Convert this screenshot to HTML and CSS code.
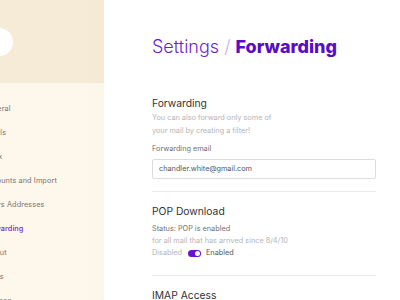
FILE: index.html
```html
<!DOCTYPE html>
<html>
<head>
<meta charset="utf-8">
<link rel="stylesheet" href="styles.css">
</head>
<body>
<div class="app">
  <aside class="sidebar">
    <div class="side-top">
      <div class="avatar"></div>
    </div>
    <ul class="nav">
      <li>General</li>
      <li>Labels</li>
      <li>Inbox</li>
      <li>Accounts and Import</li>
      <li>Filters Addresses</li>
      <li class="active">Forwarding</li>
      <li>Layout</li>
      <li>Alerts</li>
      <li>Themes</li>
    </ul>
  </aside>
  <main class="main">
    <h1 class="title"><span class="light">Settings</span> <span class="slash">/</span> <span class="bold">Forwarding</span></h1>
    <section class="section first">
      <h2>Forwarding</h2>
      <p class="desc">You can also forward only some of<br>your mail by creating a filter!</p>
      <div class="label">Forwarding email</div>
      <div class="input">chandler.white@gmail.com</div>
    </section>
    <section class="section">
      <h2>POP Download</h2>
      <div class="status">Status: POP is enabled</div>
      <div class="note">for all mail that has arrived since 8/4/10</div>
      <div class="toggle-row">
        <span class="off">Disabled</span>
        <span class="toggle"><span class="knob"></span></span>
        <span class="on">Enabled</span>
      </div>
    </section>
    <section class="section">
      <h2>IMAP Access</h2>
    </section>
  </main>
</div>
</body>
</html>
```
FILE: styles.css
```css
* { box-sizing: border-box; }
html, body { margin: 0; padding: 0; }
body {
  width: 400px;
  height: 300px;
  overflow: hidden;
  background: #ffffff;
  font-family: "Inter", "Noto Sans", sans-serif;
}
.app { display: flex; height: 300px; }
.sidebar {
  width: 104px;
  flex: none;
  background: linear-gradient(to right, #fdf7ec 0%, #fdf7ec 80%, #fcf5ea 100%);
  overflow: hidden;
}
.side-top {
  height: 83px;
  background: linear-gradient(to right, #f6ebd6 0%, #f6ebd6 80%, #f5e9d4 100%);
  padding-top: 28px;
}
.avatar {
  width: 28px;
  height: 28px;
  border-radius: 50%;
  background: #ffffff;
  margin-left: -15px;
}
.nav {
  list-style: none;
  margin: 0 0 0 -17px;
  padding: 14px 0 0 0;
  font-size: 7.3px;
  color: #7c7670;
  letter-spacing: 0.1px;
}
.nav li {
  height: 24px;
  line-height: 24px;
  white-space: nowrap;
}
.nav li.active { color: #7a2bd0; font-weight: 500; }
.main {
  flex: 1;
  padding: 0 24px 0 48px;
}
.title {
  margin: 35px 0 0 0;
  font-size: 18px;
  line-height: 24px;
  font-weight: 300;
  color: #6b1fd1;
  white-space: nowrap;
}
.title .slash { color: #c9aef0; font-weight: 300; }
.title .bold { font-weight: 800; color: #5a0cc6; }
.section {
  border-top: 1px solid #ececec;
  padding-top: 11px;
  margin-top: 12px;
}
.section.first { border-top: none; margin-top: 36px; padding-top: 0; }
h2 {
  margin: 0;
  font-size: 10.3px;
  line-height: 16px;
  font-weight: 400;
  color: #333333;
}
.desc {
  margin: 0;
  font-size: 7.3px;
  line-height: 13px;
  color: #b5b5b5;
}
.label {
  margin-top: 6px;
  font-size: 7.3px;
  line-height: 12px;
  color: #6f6f6f;
}
.input {
  margin-top: 4px;
  height: 20px;
  border: 1px solid #dcdcdc;
  border-radius: 2px;
  padding: 0 6px;
  font-size: 7.3px;
  line-height: 18px;
  color: #555555;
}
.status {
  margin-top: 4px;
  font-size: 7.3px;
  line-height: 12px;
  color: #707070;
}
.note {
  font-size: 7.3px;
  line-height: 12px;
  color: #b5b5b5;
}
.toggle-row {
  display: flex;
  align-items: center;
  gap: 5px;
  font-size: 7.3px;
  line-height: 12px;
  height: 12px;
  margin-bottom: 16px;
}
.off { color: #b5b5b5; }
.on { color: #555555; }
.toggle {
  width: 13px;
  height: 7px;
  border-radius: 4px;
  background: #6a10d2;
  display: flex;
  justify-content: flex-end;
  align-items: center;
  padding: 0 1px;
  margin-left: 1px;
}
.knob {
  width: 5px;
  height: 5px;
  border-radius: 50%;
  background: #ffffff;
}
```
